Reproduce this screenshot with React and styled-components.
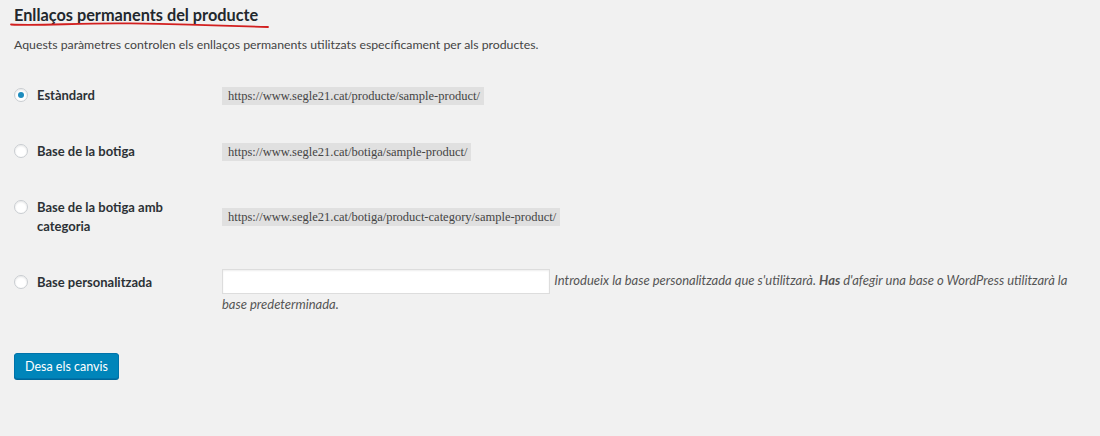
import styled, { createGlobalStyle } from 'styled-components'

const GlobalStyle = createGlobalStyle`
  html, body {
    margin: 0;
    padding: 0;
    background: #f1f1f1;
  }
  body {
    font-family: Lato, 'Liberation Sans', sans-serif;
    font-size: 13px;
    color: #444;
  }
`

const options = [
  { id: 'standard', label: 'Estàndard', url: 'https://www.segle21.cat/producte/sample-product/', checked: true },
  { id: 'shop', label: 'Base de la botiga', url: 'https://www.segle21.cat/botiga/sample-product/' },
  {
    id: 'shop-cat',
    label: 'Base de la botiga amb categoria',
    url: 'https://www.segle21.cat/botiga/product-category/sample-product/',
  },
]

export default function App() {
  return (
    <Page>
      <GlobalStyle />
      <TitleWrap>
        <Title>Enllaços permanents del producte</Title>
        <Scribble viewBox='0 0 280 10' width='280' height='10'>
          <path
            d='M11 3.5 C 40 5.2, 80 1.6, 130 2.4 S 215 4.2, 268 6'
            fill='none'
            stroke='#d21f1f'
            strokeWidth='1.8'
            strokeLinecap='round'
          />
        </Scribble>
      </TitleWrap>
      <Intro>Aquests paràmetres controlen els enllaços permanents utilitzats específicament per als productes.</Intro>

      <FormTable>
        {options.map((o) => (
          <Row key={o.id}>
            <Label>
              <Radio $checked={o.checked} />
              {o.label}
            </Label>
            <Field>
              <Code>{o.url}</Code>
            </Field>
          </Row>
        ))}
        <Row $top>
          <Label>
            <Radio />
            Base personalitzada
          </Label>
          <Field $top>
            <TextInput type='text' />{' '}
            <Hint>
              Introdueix la base personalitzada que s'utilitzarà. <b>Has</b> d'afegir una base o WordPress
              utilitzarà la base predeterminada.
            </Hint>
          </Field>
        </Row>
      </FormTable>

      <SaveButton>Desa els canvis</SaveButton>
    </Page>
  )
}

const Page = styled.div`
  padding: 4px 14px 0 14px;
  height: 436px;
  box-sizing: border-box;
`

const TitleWrap = styled.div`
  position: relative;
`

const Title = styled.h2`
  margin: 0;
  font-size: 16.3px;
  line-height: 22px;
  font-weight: 700;
  color: #23282d;
`

const Scribble = styled.svg`
  position: absolute;
  left: -14px;
  top: 17px;
`

const Intro = styled.p`
  margin: 9px 0 0 0;
  line-height: 20px;
  font-size: 12.3px;
  color: #444;
`

const FormTable = styled.div`
  margin-top: 12px;
  display: flex;
  flex-direction: column;
`

const Row = styled.div`
  display: grid;
  grid-template-columns: 208px 1fr;
  align-items: ${(p) => (p.$top ? 'start' : 'center')};
`

const Label = styled.label`
  position: relative;
  padding: 19px 10px 18px 23px;
  line-height: 19px;
  font-size: 13px;
  font-weight: 700;
  color: #2c3136;
  width: 180px;
`

const Radio = styled.span`
  position: absolute;
  left: 0;
  top: 21px;
  width: 14px;
  height: 14px;
  border-radius: 50%;
  background: #fff;
  border: 1px solid #c9cdd1;
  box-shadow: inset 0 1px 2px rgba(0, 0, 0, 0.1);
  box-sizing: border-box;
  display: flex;
  align-items: center;
  justify-content: center;
  &::after {
    content: '';
    display: ${(p) => (p.$checked ? 'block' : 'none')};
    width: 6px;
    height: 6px;
    border-radius: 50%;
    background: #1e8cbe;
  }
`

const Field = styled.div`
  padding: ${(p) => (p.$top ? '15px 10px 14px 0' : '14px 0')};
  line-height: 21px;
`

const Code = styled.code`
  display: inline-block;
  background: rgba(0, 0, 0, 0.07);
  padding: 0 4px 0 6px;
  font-family: 'Liberation Serif', serif;
  font-size: 12.5px;
  line-height: 18px;
  color: #444;
`

const TextInput = styled.input`
  width: 328px;
  height: 25px;
  box-sizing: border-box;
  border: 1px solid #ddd;
  background: #fff;
  box-shadow: inset 0 1px 2px rgba(0, 0, 0, 0.07);
  margin: 0 1px 0 0;
  vertical-align: middle;
  outline: none;
`

const Hint = styled.span`
  font-style: italic;
  color: #555;
  font-size: 13px;
  b {
    font-weight: 700;
  }
`

const SaveButton = styled.button`
  margin-top: 24px;
  height: 26px;
  padding: 0 10px;
  background: #0085ba;
  border: 1px solid #0073aa;
  border-radius: 3px;
  box-shadow: 0 1px 0 #006799;
  color: #fff;
  font-family: Lato, 'Liberation Sans', sans-serif;
  font-size: 12.5px;
  cursor: pointer;
`
